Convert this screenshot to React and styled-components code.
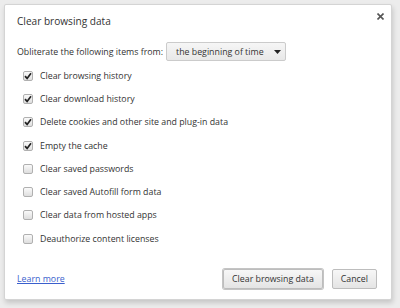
import React from 'react';
import styled, { createGlobalStyle } from 'styled-components';

const GlobalStyle = createGlobalStyle`
  html, body {
    margin: 0;
    padding: 0;
    background: #ececec;
  }
  body {
    font-family: 'Open Sans', 'Noto Sans', sans-serif;
    font-size: 8.8px;
    color: #333;
  }
`;

const Page = styled.div`
  width: 400px;
  height: 308px;
  padding: 4px 8px 8px 4px;
  box-sizing: border-box;
`;

const Dialog = styled.div`
  position: relative;
  height: 296px;
  background: #fff;
  border: 1px solid #d4d4d4;
  border-radius: 2px;
  box-shadow: 1px 3px 5px rgba(0, 0, 0, 0.16);
  box-sizing: border-box;
  padding: 8px 14px 10px 12px;
  display: flex;
  flex-direction: column;
`;

const Title = styled.h1`
  margin: 0;
  font-size: 10.1px;
  font-weight: 400;
  color: #333;
  line-height: 16px;
`;

const Close = styled.button`
  position: absolute;
  top: 7px;
  right: 6px;
  width: 9px;
  height: 9px;
  border: none;
  padding: 0;
  background: none;
  display: flex;
  align-items: center;
  justify-content: center;
`;

const RangeRow = styled.div`
  display: flex;
  align-items: center;
  margin-top: 13px;
  gap: 3px;
`;

const Select = styled.div`
  height: 19px;
  box-sizing: border-box;
  border: 1px solid #cbcbcb;
  border-radius: 2px;
  background: linear-gradient(#f6f6f6, #e8e8e8);
  display: flex;
  align-items: center;
  gap: 10px;
  padding: 0 4px 0 9px;
  color: #333;
`;

const List = styled.div`
  display: flex;
  flex-direction: column;
  margin-top: 3px;
  padding-left: 6px;
`;

const Row = styled.label`
  display: flex;
  align-items: center;
  height: 23.3px;
  gap: 7px;
`;

const Box = styled.span`
  width: 8px;
  height: 8px;
  border: 1px solid #b0b0b0;
  border-radius: 2px;
  background: linear-gradient(#fafafa, #dedede);
  display: flex;
  align-items: center;
  justify-content: center;
`;

const Footer = styled.div`
  margin-top: auto;
  display: flex;
  align-items: center;
  justify-content: space-between;
`;

const Link = styled.a`
  color: #3a5fcd;
  text-decoration: underline;
`;

const Buttons = styled.div`
  display: flex;
  gap: 9px;
`;

const Button = styled.button`
  height: 20px;
  padding: 0 8px;
  font-family: inherit;
  font-size: 8.8px;
  color: #333;
  border: 1px solid #bdbdbd;
  border-radius: 2px;
  background: linear-gradient(#f7f7f7, #e4e4e4);
  box-shadow: ${p => (p.$primary ? '0 0 0 1px #c4c4c4' : 'none')};
`;

const items = [
  ['Clear browsing history', true],
  ['Clear download history', true],
  ['Delete cookies and other site and plug-in data', true],
  ['Empty the cache', true],
  ['Clear saved passwords', false],
  ['Clear saved Autofill form data', false],
  ['Clear data from hosted apps', false],
  ['Deauthorize content licenses', false],
];

const Check = () => (
  <svg width="8" height="8" viewBox="0 0 8 8">
    <path d="M1 4.2 L3.1 6.4 L7 1.2" fill="none" stroke="#222" strokeWidth="1.7" />
  </svg>
);

export default function App() {
  return (
    <Page>
      <GlobalStyle />
      <Dialog>
        <Title>Clear browsing data</Title>
        <Close aria-label="Close">
          <svg width="7" height="7" viewBox="0 0 7 7">
            <path d="M0.5 0.5 L6.5 6.5 M6.5 0.5 L0.5 6.5" stroke="#555" strokeWidth="1.6" />
          </svg>
        </Close>
        <RangeRow>
          <span>Obliterate the following items from:</span>
          <Select>
            <span>the beginning of time</span>
            <svg width="7" height="4" viewBox="0 0 7 4">
              <path d="M0 0 H7 L3.5 4 Z" fill="#222" />
            </svg>
          </Select>
        </RangeRow>
        <List>
          {items.map(([label, checked], i) => (
            <Row key={i}>
              <Box>{checked && <Check />}</Box>
              <span>{label}</span>
            </Row>
          ))}
        </List>
        <Footer>
          <Link href="#">Learn more</Link>
          <Buttons>
            <Button $primary>Clear browsing data</Button>
            <Button>Cancel</Button>
          </Buttons>
        </Footer>
      </Dialog>
    </Page>
  );
}
